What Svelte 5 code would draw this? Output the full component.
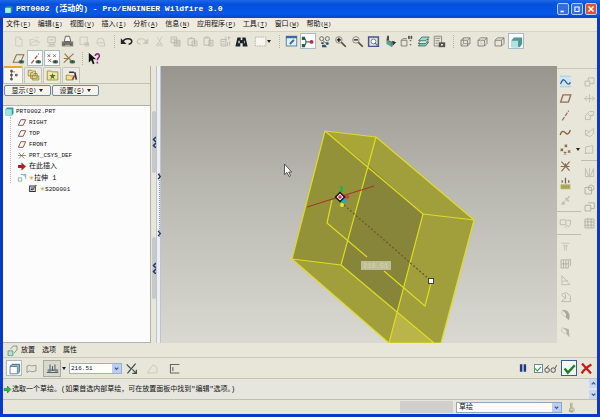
<script>
  const S = (d, c = '#b9b7aa', w = 1, x = '') =>
    `<path d="${d}" fill="none" stroke="${c}" stroke-width="${w}" ${x}/>`;
  const F = (d, c) => `<path d="${d}" fill="${c}"/>`;
  const eye = '<ellipse cx="11.5" cy="12" rx="3.500" ry="2.300" fill="#4c6f60"/><circle cx="11.5" cy="12" r="1.200" fill="#173f35"/>';
  const cube = (c, fill = 'none') =>
    `<path d="M2.500 6.500h8v7h-8zM2.500 6.500l3-3h8l-3 3M13.500 3.500v7l-3 3" fill="${fill}" stroke="${c}"/>`;
  const mag = '<circle cx="6" cy="6" r="4" fill="none" stroke="#8d8c84" stroke-width="1.200"/><path d="M9 9l5.500 5.500" stroke="#5b4a3b" stroke-width="2"/>';

  const icons = {
    app: F('M2 5l3-3h10v9l-3 3H2z', '#2b8c96') + F('M2 5h10v9H2z', '#a6f0e4'),
    doc: S('M4.5 2.5h5l3 3v8h-8zM9.5 2.5v3h3', '#cac8bb'),
    open: S('M2.5 12.5v-7h4l1 1h4v2M2.5 12.5l3-4h9l-3 4zM9 4c1-2 3-2 4 0', '#cac8bb'),
    save: S('M3.5 2.5h9v7h-9zM3 13.5h10M5 11.5h7M6 6h4', '#b5b3a7'),
    print: F('M1 8h14v6H1z', '#77766f') + F('M5 3h6l1 5H4z', '#f6f6f2') + S('M5.5 1.5h5l1.5 6.5h-8zM3 11.5h10', '#4e4d49') + F('M5 12h6v1H5z', '#dcdbd2'),
    mail: S('M2.5 2.5h9v9h-9zM8 9.5h5v4H9z', '#c6c4b7') + F('M9 10h4v3H9z', '#c6c4b8'),
    link: S('M3.5 8.5a4 4 0 119 0M3 9.5h10v4H7z', '#c3c1b5'),
    undo: S('M3.5 8c3-5 11-4 11 0 0 2-2 3-4 3.500', '#252525', 1.8) + F('M1 4v7h7z', '#252525'),
    redo: S('M12.500 8c-3-5-11-4-11 0 0 2 2 3 4 3.500', '#c9c7bb', 1.5) + F('M15 4v7H8z', '#c9c7bb'),
    cut: S('M5 2l5 9M11 2L6 11', '#c6c4b8') + S('M4.500 12.500a1.500 1.500 0 103-1 1.500 1.500 0 00-3 1M8.500 12.500a1.500 1.500 0 103-1 1.500 1.500 0 00-3 1', '#c6c4b8'),
    copy: F('M7 7h7v7H7z', '#d9d7cc') + S('M2.500 2.500h7v7h-7zM6.500 6.500h7v7h-7zM8 9h4M8 11h4M4 5h4', '#b4b2a6'),
    paste: S('M2.500 4.500h8v8h-8zM5 3.500h3M7.500 7.500h6v6h-6zM9 10h3', '#b4b2a6'),
    paste2: S('M2.500 3.500h7v9h-7zM4 2.500h4M8.500 6.500h5v7h-5zM10 9h2M10 11h2', '#b4b2a6'),
    regen: S('M2.500 5.500h6v8h-6zM8.500 2v4M11 3h3M12 2v4M10.500 9v5M13 8v5M4 8h3M4 11h3', '#b4b2a6'),
    find: F('M3 3h4v3h2V3h4l2.500 11h-6v-4h-3v4H.500z', '#20242a') + F('M4 7h2v3H4zM11 7h1v3h-1z', '#b8c4c8'),
    select: `<rect x="1.500" y="2.500" width="13" height="11" fill="#f6f5ee" stroke="#aaa99f" stroke-dasharray="2 1"/>`,
    window: F('M1 1h14v13H1z', '#3e679f') + F('M2 4h12v9H2z', '#e4f2f6') + S('M6 11l5-5', '#2d7395', 2.500),
    spin: S('M3 4c4 0 4 9 0 9M5.500 8.500H12', '#3f7c5c', 1.500) + F('M1 2h4v4H1zM1 11h4v4H1z', '#2a624a') + '<circle cx="13" cy="8.500" r="2.400" fill="#b32b45"/>',
    orient: S('M2 4.500a2.500 2.500 0 105 0 2.500 2.500 0 10-5 0M9 4.500a2.500 2.500 0 105 0 2.500 2.500 0 10-5 0M6 7l5 4', '#6d736d', 1.2) + F('M4 9h3v2H4zM10 9h3v3h-3zM5 12h4l2 3H5z', '#324d6d'),
    zin: mag + S('M3.500 6h5M6 3.500v5', '#111', 1.5),
    zout: mag + S('M3.500 6h5', '#111', 1.5),
    refit: S('M2 2.500h12v11.500H2z', '#40568c', 1.8) + '<circle cx="8" cy="8" r="3" fill="#fff" stroke="#55669a"/>' + S('M10 10l3 3', '#55669a', 1.5),
    reorient: F('M3 6l7 3v6l-7-4z', '#58a49a') + S('M3 6l7 3v5M4 6V3', '#30544e') + F('M10 7l5 2-4 4z', '#23352f') + F('M4 1h2v5H4z', '#333'),
    views: S('M1.500 6.500h7v7h-7zM1.500 6.500l2-2h5', '#6d6d67') + S('M10.500 1.500h1v3h-1zM13.500 1.500h1v3h-1zM12 7h2M12 12h2', '#333'),
    layers: `<path d="M1.500 13.500l4-5h9l-4 5z" fill="#72cdbc" stroke="#47665f"/><path d="M1.500 10.500l4-5h9l-4 5z" fill="#d5eee7" stroke="#47665f"/><path d="M2 7l4-4.500h9L11 7z" fill="#8fe0cf" stroke="#47665f"/>`,
    viewmgr: S('M1.500 1.500h9v12h-9zM3 4h6M3 7h5M3 10h3', '#7b7b74') + F('M7 9h8v6H7z', '#57554e') + '<circle cx="11" cy="12" r="1.900" fill="#eee" stroke="#333"/>',
    wire: cube('#73736c') + S('M5.500 3.500v7h8M5.500 10.500l-3 3', '#8e8d84'),
    hidden: cube('#73736c') + S('M5.500 4v6.500h8', '#c9c7bd'),
    nohid: cube('#73736c'),
    shaded: F('M2 6l3-3h10v8l-3 4H2z', '#4b9898') + F('M2 6h9v9H2z', '#aee3df') + S('M2.500 6.500h8v8', '#498080'),
    plane: S('M1.500 12.500l4-9h9l-4 9z', '#8f6a4b', 1.3) + eye,
    axis: S('M3 14L12 2', '#a35147', 1.5, 'stroke-dasharray="5 2"') + eye,
    points: S('M2 3l3 3M5 3L2 6M9 3l3 3M12 3L9 6M3 9l3 3M6 9l-3 3', '#97504a', 1.2) + eye,
    csys: S('M1 13L13 2M2 2l9 10M1 8h7', '#967842', 1.4) + eye,
    help: F('M1 1v12l3-3 2 5 2-1-2-5h4z', '#111') + S('M9 5c0-4 5.500-3 5 0 0 2-2.500 2-2.500 5M11.500 12v2', '#90288c', 2),
    tree: S('M5.500 2v11M6 3.500h4', '#777') + S('M4.500 1.500h2v2h-2zM4.500 6.500h2v2h-2zM4.500 11.500h2v2h-2zM10.500 6.500h2v2h-2z', '#333'),
    folders: `<path d="M1.500 1.500h4l1 1h4v6h-9zM4.500 4.500h3l1 1h4v6h-8zM6.500 7.500h3l1 1h4v5h-8z" fill="#f0e294" stroke="#8e843c"/>`,
    fav: `<path d="M1.500 2.500h5l1 1h7v10h-13z" fill="#f3e79d" stroke="#8e843c"/>` + F('M8 5l1 2.500h3L9.700 9.500l.8 3L8 10.800l-2.500 1.700.8-3L4 7.500h3z', '#4e7a36'),
    connect: `<path d="M1.500 7.500h4l1 1h4v5h-9z" fill="#f0e294" stroke="#8e843c"/>` + S('M5 4h6M12 4l2 9', '#333', 2) + S('M9 13l3-5', '#b33b3b', 2),
    sketch: `<rect x="1" y="1" width="14" height="14" fill="#cfe5f2"/>` + S('M1.500 14.500h13M1.500 1.500h13', '#88b9da', 1, 'stroke-dasharray="2 1"') + S('M2 11c3-8 5-5 7-2s4 3 5 0', '#2d5d8d', 1.6),
    rplane: S('M2 12.500l3-9h9.500l-3 9z', '#986b56', 1.7),
    raxis: S('M4 14l8-12', '#98705a', 1.5, 'stroke-dasharray="5 1.500"'),
    curve: S('M1.500 11c2-7 5-4 7-2s4 0 5.500-4', '#8a6540', 1.7),
    rpoints: S('M7 2l3 3M10 2L7 5M2 7l3 3M5 7l-3 3M11 9l3 3M14 9l-3 3M6 11l3 3M9 11l-3 3', '#8a6145', 1.3),
    rcsys: S('M3 2l10 11M13 2L3 14M2 8h11M8 8V4', '#886a4e', 1.4),
    analysis: F('M2 9h12v6H2z', '#b3ad5e') + S('M4 7V4M8 8V1M12 7V4', '#735b45', 1.500) + S('M3 12h10', '#7c773f', 1, 'stroke-dasharray="1 1"'),
    chain: S('M3 13l4-4M8 8l5-5M4 10l3 3M8 5l4 4', '#c3c1b5', 2),
    note: S('M1.500 3.500h7v6h-7zM10 4h4v5l-3 4M7 13l4-3', '#bbb9ad', 1.2),
    hole: S('M3 4h10M5 7h6M7 7v6M9 7v6', '#c0beb2'),
    shell: S('M2.500 3.500h9v10h-9zM5.500 4v9M8.500 4v9M3 8.500h9M12 3l2 0v8', '#a9a79b'),
    rib: S('M3.500 2v11h10zM4 9l7-1', '#bbb9ad'),
    draft: S('M3 4l6-2 5 4v7H3l5-4-5-4M8 9V4', '#b4b2a6'),
    round: F('M4 2c8 0 11 6 8 13l-4-4c2-3 0-6-4-8z', '#aaa89d') + S('M4 3l-1 4 5 4', '#c6c4b8'),
    cham: F('M4 3l8 2 1 10-4-4V7z', '#b5b3a7') + S('M4 3l-1 5 5 3', '#c6c4b8'),
    ext: S('M2.500 7.500h6v6h-6zM6.500 7V3.500h7v7H9', '#b5b3a7'),
    rev: S('M2 8h12M5 5l-3 3 3 3M8 3v10M11 5l3 3-3 3', '#b9b7ab'),
    sweep: S('M3 13V8l5-5h5v4l-4 2v4zM5 5l3 3h5', '#b9b7ab'),
    blend: S('M3 11V5l5 2 5-4v6l-4 4zM3 11l5-4', '#b9b7ab'),
    bound: S('M3 12.500V5l9-2v9.500zM2 13h3', '#b9b7ab'),
    mirror: S('M3 3l4 10H3zM13 3L9 13h4zM8 2v12', '#b9b7ab'),
    merge: S('M2.500 5.500h8v8h-8z', '#aaa89d') + '<circle cx="10" cy="6" r="3.500" fill="none" stroke="#aaa89d"/>',
    trim: S('M2.500 6.500h7v7h-7zM6 3.500h8v7h-4', '#aaa89d'),
    pattern: S('M2.500 2.500h11v11h-11zM6 2v11M10 2v11M2 6h11M2 10h11', '#aaa89d'),
    cubeS: F('M1 4l3-3h11v11l-3 3H1z', '#3798a0') + F('M1 4h11v11H1z', '#9de5df'),
    datum: S('M1.500 13l4.500-10h8.500l-4.500 10z', '#8d5148', 1.7),
    csysT: S('M2 3l10 10M12 3L3 13M1 8h14', '#7b6849', 1.300),
    arrow: F('M1 5.500h6V1l8 7-8 7v-4.500H1z', '#b41a22'),
    extrude: `<path d="M1.500 8.500h6v6h-6z" fill="#eefafa" stroke="#438d96"/>` + S('M6 2.500h8.500V10', '#438d96', 1.3) + F('M9 3h5v5z', '#8fd6d6'),
    pencil: S('M2 3.500h10v10H2zM4 7h5M4 10h5', '#23304e', 1.8) + S('M7 10l7-8', '#8d651e', 2.5),
    placement: `<path d="M1.500 8.500h7v7h-7z" fill="#b4e8d0" stroke="#438272"/><path d="M5 6l4-4.500h5.500V7L10 12" fill="none" stroke="#54796f"/>`,
    solid: F('M2 5l3-3h10v9l-3 4z', '#9bbac2') + F('M2 5h10v10H2z', '#fff') + S('M2.500 5.500h9v9h-9zM3 5l2-2h9v9.500L12 14.500', '#456d7b'),
    surface: S('M2.500 13V5l3-1 3 1 5-1v7l-5 1-3-1z', '#7b9184'),
    depth: S('M1 13h14M5 3v7h6V3M8 5v6', '#56605c', 1.3) + F('M2 9h4v3H2zM11 9h4v3h-4z', '#728694'),
    flip: S('M3 14L13 2', '#345', 1.500) + S('M2 3l5 5M9 9l5 5M14 9.500V14H9', '#44524a', 1.5),
    remove: S('M1.500 13.500l7-10 5 3v7z', '#cac8bb', 1.2),
    thick: S('M14 3H3v10.500h11M6 6v5', '#5d6868', 1.3),
    check: S('M2 8l4 5L14.500 4', '#168527', 3),
    cross: S('M2.500 2c3 3 7 8 11 12M14 3C9 6 5 9 2 14', '#c51a1a', 2.8),
    pause: F('M3 2h4v12H3zM9 2h4v12H9z', '#1e3d86'),
    glasses: S('M1 10a2.800 2.800 0 105.600 0 2.800 2.800 0 10-5.600 0M8.500 10a2.800 2.800 0 105.600 0 2.800 2.800 0 10-5.600 0M2 8l4-4M13.500 8l2-4', '#55544e', 1.2),
    go: `<path d="M2 6h6V2l6 6-6 6v-4H2z" fill="#30b750" stroke="#147029"/>`,
    lamp: F('M6 1h4v6l3 3v3l-4 3-4-2v-4l1-2z', '#c9c4a9') + S('M7 2v6l-2 3v3h5', '#96917b'),
    up: S('M4 10l4-4 4 4', '#3f5384', 2.5),
    down: S('M4 6l4 4 4-4', '#3f5384', 2.5)
  };

  const menus = [
    ['文件', 'F'], ['编辑', 'E'], ['视图', 'V'], ['插入', 'I'], ['分析', 'A'],
    ['信息', 'N'], ['应用程序', 'P'], ['工具', 'T'], ['窗口', 'W'], ['帮助', 'H']
  ];
  const fileTools = [['doc', '新建'], ['open', '打开'], ['save', '保存'], ['print', '打印'], ['mail', '发送'], ['link', '链接']];
  const editTools = [['undo', '撤消'], ['redo', '重做'], ['cut', '剪切'], ['copy', '复制'], ['paste', '粘贴'], ['paste2', '选择性粘贴'], ['regen', '再生'], ['find', '查找']];
  const viewTools = [['window', '重画'], ['spin', '旋转中心', 1], ['orient', '定向模式'], ['zin', '放大'], ['zout', '缩小'], ['refit', '重新调整'], ['reorient', '重定向'], ['views', '视图列表'], ['layers', '层'], ['viewmgr', '视图管理器']];
  const shadeTools = [['wire', '线框'], ['hidden', '隐藏线'], ['nohid', '无隐藏线'], ['shaded', '着色', 1]];
  const datumTools = [['plane', '平面显示'], ['axis', '轴显示', 1], ['points', '点显示', 1], ['csys', '坐标系显示']];
  const tabs = [['tree', '模型树'], ['folders', '文件夹'], ['fav', '收藏夹'], ['connect', '连接']];
  const colA = [
    ['sketch', '草绘'], ['rplane', '平面'], ['raxis', '轴'], ['curve', '曲线'], ['rpoints', '点'], ['rcsys', '坐标系'], ['analysis', '分析'], ['chain', '参照'],
    null, ['note', '注释'], null,
    ['hole', '孔'], ['shell', '壳'], ['rib', '筋'], ['draft', '拔模'], ['round', '倒圆角'], ['cham', '倒角']
  ];
  const colB = [
    ['ext', '拉伸'], ['rev', '旋转'], ['sweep', '扫描'], ['blend', '混合'], ['bound', '边界'], null,
    ['mirror', '镜像'], ['merge', '合并'], ['trim', '修剪'], ['pattern', '阵列']
  ];
  const tree = [
    ['datum', 'RIGHT'], ['datum', 'TOP'], ['datum', 'FRONT'], ['csysT', 'PRT_CSYS_DEF'], ['arrow', '在此插入'], ['extrude', '拉伸 1', 1]
  ];
  let depth = $state('216.51');
  let preview = $state(true);
</script>

{#snippet icon(name)}
  <svg class="icon" viewBox="0 0 16 16" aria-hidden="true">{@html icons[name]}</svg>
{/snippet}

{#snippet tools(list)}
  {#each list as [name, label, on]}
    <button class="tool" class:on aria-label={label}>{@render icon(name)}</button>
  {/each}
{/snippet}

{#snippet column(list)}
  {#each list as item}
    {#if item}
      <button class="tool" aria-label={item[1]}>{@render icon(item[0])}{#if item[0] === 'rpoints'}<i class="caret side"></i>{/if}</button>
    {:else}
      <hr />
    {/if}
  {/each}
{/snippet}

{#snippet handle(label)}
  <button class="handle" aria-label={label}><svg viewBox="0 0 5 12"><path d="M4 1L1.500 3.500 4 6M4 7L1.500 9.500 4 12" fill="none" stroke="#20366e" stroke-width="1.500" /></svg></button>
{/snippet}

<div class="window">
  <header class="title">
    {@render icon('app')}
    <h1>PRT0002 (<span>活动的</span>) - Pro/ENGINEER Wildfire 3.0</h1>
    <button class="win" aria-label="最小化"><svg viewBox="0 0 12 12"><path d="M3 9h4" stroke="#fff" stroke-width="2" /></svg></button>
    <button class="win" aria-label="最大化"><svg viewBox="0 0 12 12"><path d="M3 3.500h6M3.500 3v6h5V3" stroke="#fff" fill="none" stroke-width="1.300" /></svg></button>
    <button class="win close" aria-label="关闭"><svg viewBox="0 0 12 12"><path d="M3 3l6 6M9 3L3 9" stroke="#fff" stroke-width="1.800" /></svg></button>
  </header>

  <div class="body">
    <nav class="menu">
      {#each menus as [label, key]}
        <button class="item">{label}<span class="key">(<u>{key}</u>)</span></button>
      {/each}
    </nav>

    <div class="bar main-bar">
      <div class="group file">{@render tools(fileTools)}</div>
      <i class="sep"></i>
      <div class="group edit">{@render tools(editTools)}</div>
      <button class="tool drop" aria-label="选取">{@render icon('select')}<i class="caret"></i></button>
      <i class="sep"></i>
      <div class="group view">{@render tools(viewTools)}</div>
      <i class="sep"></i>
      <div class="group shade">{@render tools(shadeTools)}</div>
    </div>
    <div class="bar datum-bar">
      <div class="group datum">{@render tools(datumTools)}</div>
      <i class="sep"></i>
      <button class="tool" aria-label="上下文帮助">{@render icon('help')}</button>
    </div>

    <main>
      <aside class="navigator">
        <div class="tabs">
          {#each tabs as [name, label], i}
            <button class="tab" class:active={i === 0} aria-label={label}>{@render icon(name)}</button>
          {/each}
        </div>
        <div class="options">
          <button>显示<span class="key">(<u>O</u>)</span><i class="caret"></i></button>
          <button>设置<span class="key">(<u>G</u>)</span><i class="caret"></i></button>
        </div>
        <div class="strip"></div>
        <div class="tree">
          <div class="row">{@render icon('cubeS')}<span>PRT0002.PRT</span></div>
          <ul>
            {#each tree as [name, label, star]}
              <li class="row">{@render icon(name)}<span>{#if star}<b>✳</b>{/if}{label}</span></li>
            {/each}
          </ul>
          <div class="row child">{@render icon('pencil')}<span><b>✳</b>S2D0001</span></div>
        </div>
      </aside>
      <div class="splitter">
        <div class="handles">
          {@render handle('折叠导航器')}
          {@render handle('收起导航器')}
        </div>
        <div class="rail">
          <button class="thin" aria-label="展开浏览器">
            <svg viewBox="0 0 4 8"><path d="M1 1l2.500 3L1 7" fill="none" stroke="#20366e" stroke-width="1.500" /></svg>
            <svg viewBox="0 0 4 8"><path d="M1 1l2.500 3L1 7" fill="none" stroke="#20366e" stroke-width="1.500" /></svg>
          </button>
        </div>
      </div>
      <svg class="scene" viewBox="161 66 396 277" preserveAspectRatio="xMinYMin slice" role="img" aria-label="模型">
        <polygon points="325,131 376,137 474,220 441,343 389,343 292,259" fill="#a19e3c" />
        <polygon points="325,131 376,137 368,165" fill="#a9a638" />
        <polygon points="325,131 368,165 341,265 292,259" fill="#949239" />
        <polygon points="368,165 423,214 397,312 341,265" fill="#868539" />
        <polygon points="397,312 434,343 389,343" fill="#b9b54a" />
        <g fill="none" stroke="#dddc25" stroke-width="1.200" stroke-linejoin="round">
          <path d="M325 131L376 137 474 220 441 343M325 131L292 259 389 343 423 214zM376 137L341 265 434 343M292 259l49 6M423 214l51 6M389 343h52" />
          <path d="M332 200l-5 23 40 34M384 271l41 35 6-23" />
        </g>
        <path d="M307 207L374 186" stroke="#a33a26" stroke-width="1.200" />
        <path d="M344 205L430 280" stroke="#6c5a31" stroke-dasharray="2 2" stroke-width="1.300" />
        <path d="M341.500 186v6" stroke="#2bb04a" stroke-width="3" />
        <circle cx="344" cy="200" r="3" fill="#22aeb2" />
        <path d="M345 197h4" stroke="#dc3448" stroke-width="3" />
        <circle cx="342" cy="205" r="2" fill="#e4e33c" />
        <path d="M340 192.500l4.500 4.500-4.500 4.500-4.500-4.500z" fill="#fff" stroke="#151515" stroke-width="1.500" />
        <circle cx="340" cy="197" r="1.800" fill="#d92b45" />
        <rect x="428.500" y="278.500" width="5" height="5" fill="#fff" stroke="#444" />
        <rect x="361" y="261" width="30" height="9" fill="#bfbd94" />
        <text x="363" y="268" fill="#d6d4b5" font-size="7">216.51</text>
        <path d="M284.500 164v10.500l2.500-2 2 4 1.500-.700-1.800-3.800h3z" fill="#fff" stroke="#383838" stroke-width=".8" />
      </svg>
      <aside class="features">
        <div class="col">{@render column(colA)}</div>
        <div class="col second">{@render column(colB)}</div>
      </aside>
    </main>

    <div class="dash-tabs">
      {@render icon('placement')}
      <button>放置</button><button>选项</button><button>属性</button>
    </div>
    <div class="dash">
      <button class="tool on" aria-label="实体">{@render icon('solid')}</button>
      <button class="tool" aria-label="曲面">{@render icon('surface')}</button>
      <button class="tool pressed" aria-label="深度选项">{@render icon('depth')}</button>
      <i class="caret"></i>
      <div class="combo">
        <input aria-label="深度" bind:value={depth} />
        <button class="arrow" aria-label="最近的值">{@render icon('down')}</button>
      </div>
      <div class="group dash-tools">{@render tools([['flip', '反向'], ['remove', '去除材料'], ['thick', '加厚']])}</div>
      <div class="confirm">
        <button class="small" aria-label="暂停">{@render icon('pause')}</button>
        <label><input type="checkbox" bind:checked={preview} aria-label="预览" />{@render icon('glasses')}</label>
        <button class="accept" aria-label="确定">{@render icon('check')}</button>
        <button class="tool" aria-label="取消">{@render icon('cross')}</button>
      </div>
    </div>

    <div class="message">
      {@render icon('go')}
      <p>选取一个草绘。(如果首选内部草绘，可在放置面板中找到"编辑"选项。)</p>
      <div class="scroll">
        <button aria-label="向上">{@render icon('up')}</button>
        <button aria-label="向下">{@render icon('down')}</button>
      </div>
    </div>
    <footer>
      <span class="well"></span>
      <div class="filter">
        <select aria-label="过滤器"><option>草绘</option></select>
        <span class="arrow">{@render icon('down')}</span>
      </div>
      {@render icon('lamp')}
    </footer>
  </div>
</div>

<style>
  :global(body) { margin: 0; background: #e8e6d9; }
  .window {
    box-sizing: border-box; height: 100vh; display: flex; flex-direction: column;
    border: solid #0839c8; border-width: 0 3px 3px; background: #e8e6d9; color: #111;
    font: 7px/9px "Liberation Mono", "Noto Sans CJK SC", monospace;
  }
  button, input, select {
    box-sizing: border-box; margin: 0; padding: 0; border: 0; border-radius: 0;
    background: none; color: inherit; font: inherit;
  }
  svg { display: block; }
  .icon { width: 13px; height: 13px; flex: none; }
  .key { font-size: 6px; }
  .caret { flex: none; border: 2px solid transparent; border-top: 3px solid #222; border-bottom: 0; }

  .title {
    flex: none; height: 18px; margin: 0 -3px; padding: 0 3px 0 4px; box-sizing: border-box;
    display: flex; align-items: center; gap: 2px;
    background: linear-gradient(#1c68e6, #0450dc 25%, #0458ea 75%, #0647c8);
  }
  .title .icon { width: 9px; height: 9px; }
  h1 { flex: 1; margin: 0 0 0 1px; color: #fff; font-size: 8px; line-height: 12px; font-weight: bold; white-space: nowrap; }
  h1 span { font-size: 8px; }
  .win { width: 12px; height: 12px; border: 1px solid #b9cdf6; border-radius: 2px; background: #356be0; }
  .win svg { width: 10px; height: 10px; }
  .win.close { background: #dd5634; }

  .body { flex: 1; min-height: 0; display: flex; flex-direction: column; }
  .menu {
    flex: none; height: 14px; box-sizing: border-box; padding-left: 3px; display: flex; align-items: center; gap: 7px;
    background: #eeecdf; border-bottom: 1px solid #d4d2c3;
  }
  .item { white-space: nowrap; }
  .bar { flex: none; display: flex; align-items: center; padding-left: 7px; }
  .main-bar { height: 18px; }
  .datum-bar { height: 16px; }
  .group { display: flex; justify-content: space-between; flex: none; }
  .file { width: 99px; }
  .edit { width: 132px; }
  .view { width: 165px; }
  .shade, .datum { width: 67px; }
  .tool { width: 16px; height: 16px; flex: none; display: flex; align-items: center; justify-content: center; border: 1px solid transparent; }
  .tool.on { background: #fcfcfa; border-color: #a9bac4; }
  .drop { width: 24px; }
  .sep { height: 13px; margin: 0 3px 0 5px; flex: none; border-left: 1px dotted #b5b3a6; }

  main { flex: 1; min-height: 0; display: flex; }
  .navigator { width: 148px; flex: none; display: flex; flex-direction: column; border-right: 1px solid #b3b1a6; box-sizing: border-box; }
  .tabs { display: flex; height: 17px; flex: none; align-items: flex-end; }
  .tab {
    width: 18px; height: 16px; margin-right: 1px; display: flex; align-items: center; justify-content: center;
    border: 1px solid #c4c5bc; border-bottom: 0; border-radius: 2px 2px 0 0; background: #edebe0;
  }
  .tab.active { width: 20px; height: 17px; background: #f8f7f0; border-top: 2px solid #e6a33b; }
  .options { display: flex; gap: 1px; padding: 1px; height: 13px; flex: none; box-sizing: border-box; border-top: 1px solid #c2c1b6; }
  .options button {
    width: 47px; height: 11px; display: flex; align-items: center; justify-content: center;
    border: 1px solid #6f88a0; border-radius: 2px; background: #f4f3ec; line-height: 8px;
  }
  .options .caret { margin-left: 3px; }
  .strip { height: 9px; flex: none; border-bottom: 1px solid #aeb0aa; }
  .tree { flex: 1; min-height: 0; overflow: hidden; padding-left: 2px; background: #fcfcfc; border-bottom: 1px solid #b1b3ba; }
  .row { height: 11px; display: flex; align-items: center; gap: 2px; white-space: nowrap; font-size: 7px; }
  .row span { font: 6px/11px "Liberation Mono", "Noto Sans CJK SC", monospace; }
  .row .icon { width: 9px; height: 9px; }
  .row b { color: #a39413; font: 6px/11px "DejaVu Sans", sans-serif; }
  ul { list-style: none; margin: 0 0 0 5px; padding: 0 0 0 6px; border-left: 1px dotted #b9b9b9; }
  ul .row .icon { width: 10px; }
  .row:nth-child(n + 5) span { font-size: 7px; }
  .child { padding-left: 23px; }
  .child .icon { width: 10px; }

  .splitter { width: 10px; flex: none; display: flex; box-sizing: border-box; padding-left: 1px; }
  .handles { width: 4px; padding-top: 45px; display: flex; flex-direction: column; gap: 64px; }
  .handle { width: 4px; height: 62px; display: flex; align-items: center; justify-content: center; background: #c3cac9; border-radius: 2px; }
  .handle svg { width: 5px; height: 12px; flex: none; }
  .rail { width: 5px; padding-top: 107px; box-sizing: border-box; border: solid #bcc3d6; border-width: 0 1px; background: #eceef0; }
  .thin { width: 3px; height: 64px; display: flex; flex-direction: column; justify-content: space-between; border-right: 1px dotted #8f95b5; }
  .thin svg { width: 4px; height: 7px; }
  .scene { flex: 1; min-width: 0; height: 100%; background: linear-gradient(#97958e, #b9b8b1 45%, #dad9d1); }
  .features { width: 40px; flex: none; display: flex; justify-content: space-between; box-sizing: border-box; padding-top: 2px; }
  .col { width: 24px; padding-top: 4px; border-top: 1px solid #c9c7b9; display: flex; flex-direction: column; align-items: flex-start; gap: 1px; }
  .second { width: 16px; }
  .col .tool { position: relative; }
  .side { position: absolute; left: 18px; top: 6px; }
  hr { width: 100%; height: 1px; margin: 2px 0; border: 0; background: #bebcae; }

  .dash-tabs { flex: none; height: 15px; box-sizing: border-box; display: flex; align-items: center; gap: 7px; padding-left: 4px; border-bottom: 1px solid #cbc9bc; }
  .dash-tabs .icon { width: 11px; height: 11px; margin-right: -4px; }
  .dash { flex: none; height: 21px; display: flex; align-items: center; padding: 0 3px; gap: 1px; box-sizing: border-box; border-bottom: 1px solid #c3c1b5; }
  .dash .pressed { width: 18px; height: 17px; margin-left: 3px; background: #d9d8cc; border-color: #aaa99f; }
  .combo { width: 53px; height: 11px; margin-left: 2px; display: flex; box-sizing: border-box; border: 1px solid #9cb0c6; background: #fff; }
  .combo input { flex: 1; min-width: 0; padding-left: 1px; font-size: 6px; }
  .arrow { width: 9px; height: 9px; flex: none; display: flex; align-items: center; justify-content: center; background: #bccdf5; }
  .arrow .icon { width: 7px; height: 7px; }
  .dash-tools { width: 59px; }
  .confirm { flex: 1; display: flex; justify-content: flex-end; align-items: center; }
  .small { width: 12px; margin-right: 4px; }
  .small .icon { width: 10px; height: 10px; }
  label { display: flex; align-items: center; gap: 1px; margin-right: 4px; }
  input[type='checkbox'] {
    appearance: none; width: 9px; height: 9px; border: 1px solid #6b8f92;
    background: #fff;
  }
  input[type='checkbox']:checked::after {
    content: ''; display: block; box-sizing: border-box; width: 6px; height: 4px; margin-top: 1px;
    border: solid #2a9a34; border-width: 0 0 1px 1px; transform: rotate(-45deg);
  }
  .accept { width: 16px; height: 16px; margin-right: 1px; display: flex; align-items: center; justify-content: center; border: 1px solid #365d95; background: #f7faf7; }

  .message { flex: none; height: 21px; display: flex; align-items: center; box-sizing: border-box; background: #e6e6df; border-bottom: 1px solid #c0bfb5; }
  .message > .icon { width: 9px; height: 9px; }
  p { flex: 1; margin: 0; white-space: nowrap; }
  .scroll { width: 8px; display: flex; flex-direction: column; gap: 2px; }
  .scroll button { width: 8px; height: 9px; background: #c9d6f5; display: flex; align-items: center; justify-content: center; }
  .scroll .icon { width: 7px; height: 7px; }

  footer { flex: none; height: 14px; display: flex; align-items: center; justify-content: flex-end; padding-right: 20px; }
  footer .well { width: 53px; height: 12px; background: #d0cfcd; margin-right: 3px; }
  .filter { width: 106px; height: 11px; display: flex; box-sizing: border-box; border: 1px solid #91a7bd; background: #fff; margin-right: 4px; }
  .filter select { flex: 1; min-width: 0; appearance: none; padding-left: 2px; line-height: 9px; }
  footer > .icon { width: 11px; height: 11px; }
</style>
